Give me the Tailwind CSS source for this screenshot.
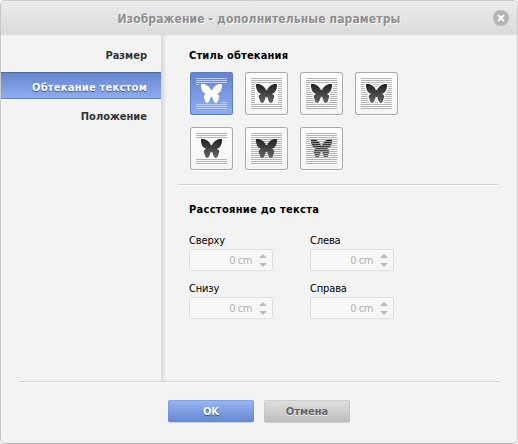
<!DOCTYPE html>
<html lang="ru">
<head>
<meta charset="utf-8">
<title>Изображение - дополнительные параметры</title>
<script src="https://cdn.jsdelivr.net/npm/@tailwindcss/browser@4"></script>
</head>
<body class="bg-white font-['DejaVu_Sans_Condensed','DejaVu_Sans',sans-serif] [font-stretch:condensed] text-[11px] leading-[14px] text-black">
<svg class="absolute size-0" aria-hidden="true">
  <defs>
    <linearGradient id="dark" x1="0" y1="0" x2="0" y2="1"><stop offset="0" stop-color="#222"/><stop offset="1" stop-color="#666"/></linearGradient>
    <path id="fly" d="M11 12.300C13 11.800 15.500 12.300 17.500 13.700C19.500 15.200 20.500 16.500 20.800 18.300L21.500 17.800L22.200 18.300C22.500 16.500 23.500 15.200 25.500 13.700C27.500 12.300 30 11.800 32 12.300C32.200 15 31.500 19 29.300 20.500C28.500 21.300 27.500 21.800 26.800 22C28.500 22.500 29.500 23.600 29.200 25C29 26.200 28.400 26.500 28.200 28C27.800 30.200 27 31 25.500 31C23.800 30.500 23 27.500 22.200 24.500L21.500 25.500L20.800 24.500C20 27.500 19.200 30.500 17.500 31C16 31 15.200 30.200 14.800 28C14.600 26.500 14 26.200 13.800 25C13.500 23.600 14.500 22.500 16.200 22C15.500 21.800 14.500 21.300 13.700 20.500C11.500 19 10.800 15 11 12.300Z"/>
    <path id="lines" d="M6 6.500H37M6 8.500H37M6 10.500H37M6 12.500H37M6 14.500H37M6 16.500H37M6 18.500H37M6 20.500H37M6 22.500H37M6 24.500H37M6 26.500H37M6 28.500H37M6 30.500H37M6 32.500H37M6 34.500H37M6 36.500H37"/>
    <path id="ends" d="M6 6.500H37M6 8.500H37M6 10.500H37M6 32.500H37M6 34.500H37M6 36.500H37"/>
    <clipPath id="stripes"><path d="M6 12.700h31v1.300h-31zM6 14.700h31v1.300h-31zM6 16.700h31v1.300h-31zM6 18.700h31v1.300h-31zM6 20.700h31v1.300h-31zM6 22.700h31v1.300h-31zM6 24.700h31v1.300h-31zM6 26.700h31v1.300h-31zM6 28.700h31v1.300h-31z"/></clipPath>
  </defs>
</svg>
<main class="flex h-[444px] w-[518px] flex-col overflow-hidden rounded-[5px] border border-[#c8c8c8] border-b-[#b8b8b8] bg-[#f3f3f3]">
  <header class="relative flex h-[34px] shrink-0 items-center justify-center bg-linear-to-b from-[#ececec] to-[#dadada]">
    <h1 class="pt-[2px] text-[12px] font-bold tracking-[0.13px] text-[#8f8f8f] [text-shadow:1px_1px_0_#f8f8f8]">Изображение - дополнительные параметры</h1>
    <button class="absolute top-[9px] right-[8px] size-4" aria-label="Закрыть"><svg class="size-4" viewBox="0 0 16 16"><circle cx="8" cy="8" r="8" fill="#b5b5b5"/><path d="M5 5L11 11M11 5L5 11" stroke="#fff" stroke-width="2"/></svg></button>
  </header>
  <div class="flex h-[346px] shrink-0">
    <nav class="flex w-40 flex-col pt-[8px] text-right font-bold text-[#333] *:pr-[14px]">
      <div class="h-[29px] pt-[6px]">Размер</div>
      <div class="h-[27px] border-t border-b border-t-[#4b68a0] border-b-[#6482c0] bg-linear-to-b from-[#6684cc] to-[#8fadf4] pt-[8px] tracking-[0.25px] text-white shadow-[0_1px_0_#fff] [text-shadow:0_1px_1px_#34508d]">Обтекание текстом</div>
      <div class="pt-[11px]">Положение</div>
    </nav>
    <div class="w-[6px] bg-linear-to-r from-[#d8d8d8] to-[#f3f3f3]"></div>
    <section class="w-[332px] pt-[14px] pl-[22px]">
      <h2 class="font-bold tracking-[0.18px]">Стиль обтекания</h2>
      <div class="mt-[9px] ml-px grid grid-cols-[repeat(4,43px)] gap-3 *:h-[43px] *:w-[43px] *:rounded-[3px]">
        <svg viewBox="0 0 43 43" class="bg-linear-to-b from-[#6684cc] to-[#8fadf4] shadow-[inset_0_0_0_1px_#5f7fc0,0_1px_0_#fff]"><path d="M6 6.500H37M6 8.500H37M6 10.500H37M6 12.500H9M31 30.500H37M6 32.500H37M6 34.500H37M6 36.500H37" stroke="#bccdf5"/><use href="#fly" fill="#fff"/></svg>
        <svg viewBox="0 0 43 43" class="bg-linear-to-b from-white to-[#f4f4f4] shadow-[inset_0_0_0_1px_#aaa,0_1px_0_#fff]"><use href="#lines" stroke="#b5b5b5"/><path d="M10 12h23v19h-23z" fill="#fafafa"/><use href="#fly" fill="url(#dark)"/></svg>
        <svg viewBox="0 0 43 43" class="bg-linear-to-b from-white to-[#f4f4f4] shadow-[inset_0_0_0_1px_#aaa,0_1px_0_#fff]"><use href="#lines" stroke="#b5b5b5"/><use href="#fly" fill="#fafafa" stroke="#fafafa" stroke-width="3"/><path d="M14 12h15l-5 5h-5zM19 24h5l2 7h-9z" fill="#fafafa"/><use href="#fly" fill="url(#dark)"/></svg>
        <svg viewBox="0 0 43 43" class="bg-linear-to-b from-white to-[#f4f4f4] shadow-[inset_0_0_0_1px_#aaa,0_1px_0_#fff]"><use href="#lines" stroke="#b5b5b5"/><use href="#fly" fill="#fafafa" stroke="#fafafa" stroke-width="3"/><use href="#fly" fill="url(#dark)"/></svg>
        <svg viewBox="0 0 43 43" class="bg-linear-to-b from-white to-[#f4f4f4] shadow-[inset_0_0_0_1px_#aaa,0_1px_0_#fff]"><use href="#ends" stroke="#b5b5b5"/><use href="#fly" fill="url(#dark)"/></svg>
        <svg viewBox="0 0 43 43" class="bg-linear-to-b from-white to-[#f4f4f4] shadow-[inset_0_0_0_1px_#aaa,0_1px_0_#fff]"><use href="#lines" stroke="#b5b5b5"/><use href="#fly" fill="url(#dark)"/></svg>
        <svg viewBox="0 0 43 43" class="bg-linear-to-b from-white to-[#f4f4f4] shadow-[inset_0_0_0_1px_#aaa,0_1px_0_#fff]"><use href="#lines" stroke="#b5b5b5"/><g clip-path="url(#stripes)"><use href="#fly" fill="url(#dark)"/></g></svg>
      </div>
      <div class="-ml-[10px] mt-[14px] h-[2px] w-[320px] border-t border-[#cfcfcf] bg-white"></div>
      <h2 class="mt-[17px] font-bold tracking-[0.3px]">Расстояние до текста</h2>
      <div class="mt-[17px] grid grid-cols-[84px_84px] gap-x-[37px] gap-y-[11px] [&_label]:block [&_label]:h-[15px] [&_label]:tracking-[-0.15px] [&_.field]:flex [&_.field]:h-[22px] [&_.field]:items-center [&_.field]:justify-end [&_.field]:gap-[7px] [&_.field]:rounded-[2px] [&_.field]:border [&_.field]:border-[#dedede] [&_.field]:bg-[#f7f7f7] [&_.field]:pr-[5px] [&_.field]:text-[#b2b2b2] [&_span]:pt-px [&_span]:tracking-[-0.45px]">
        <div><label>Сверху</label><div class="field"><span>0 cm</span><svg class="h-[14px] w-[8px]" viewBox="0 0 8 14"><path d="M0 5L4 1L8 5ZM0 10H8L4 14Z" fill="#bbb"/></svg></div></div>
        <div><label>Слева</label><div class="field"><span>0 cm</span><svg class="h-[14px] w-[8px]" viewBox="0 0 8 14"><path d="M0 5L4 1L8 5ZM0 10H8L4 14Z" fill="#bbb"/></svg></div></div>
        <div><label>Снизу</label><div class="field"><span>0 cm</span><svg class="h-[14px] w-[8px]" viewBox="0 0 8 14"><path d="M0 5L4 1L8 5ZM0 10H8L4 14Z" fill="#bbb"/></svg></div></div>
        <div><label>Справа</label><div class="field"><span>0 cm</span><svg class="h-[14px] w-[8px]" viewBox="0 0 8 14"><path d="M0 5L4 1L8 5ZM0 10H8L4 14Z" fill="#bbb"/></svg></div></div>
      </div>
    </section>
  </div>
  <footer class="mx-[18px] flex shrink-0 justify-center gap-[10px] border-t border-[#cecece] pt-[18px] shadow-[inset_0_1px_0_#fff]">
    <button class="h-[22px] w-[86px] rounded-[2px] bg-linear-to-b from-[#9bb7f5] to-[#6586cf] pt-px font-bold text-white shadow-[0_1px_0_#d0d0d0,inset_0_0_0_1px_#6c8bd080] [text-shadow:0_1px_1px_#34508d]">OK</button>
    <button class="h-[22px] w-[86px] rounded-[2px] bg-linear-to-b from-[#e0e0e0] to-[#bebebe] pt-px font-bold text-[#666] shadow-[0_1px_0_#d0d0d0,inset_0_0_0_1px_#bbbbbb80] [text-shadow:0_1px_0_#eee]">Отмена</button>
  </footer>
</main>
</body>
</html>
